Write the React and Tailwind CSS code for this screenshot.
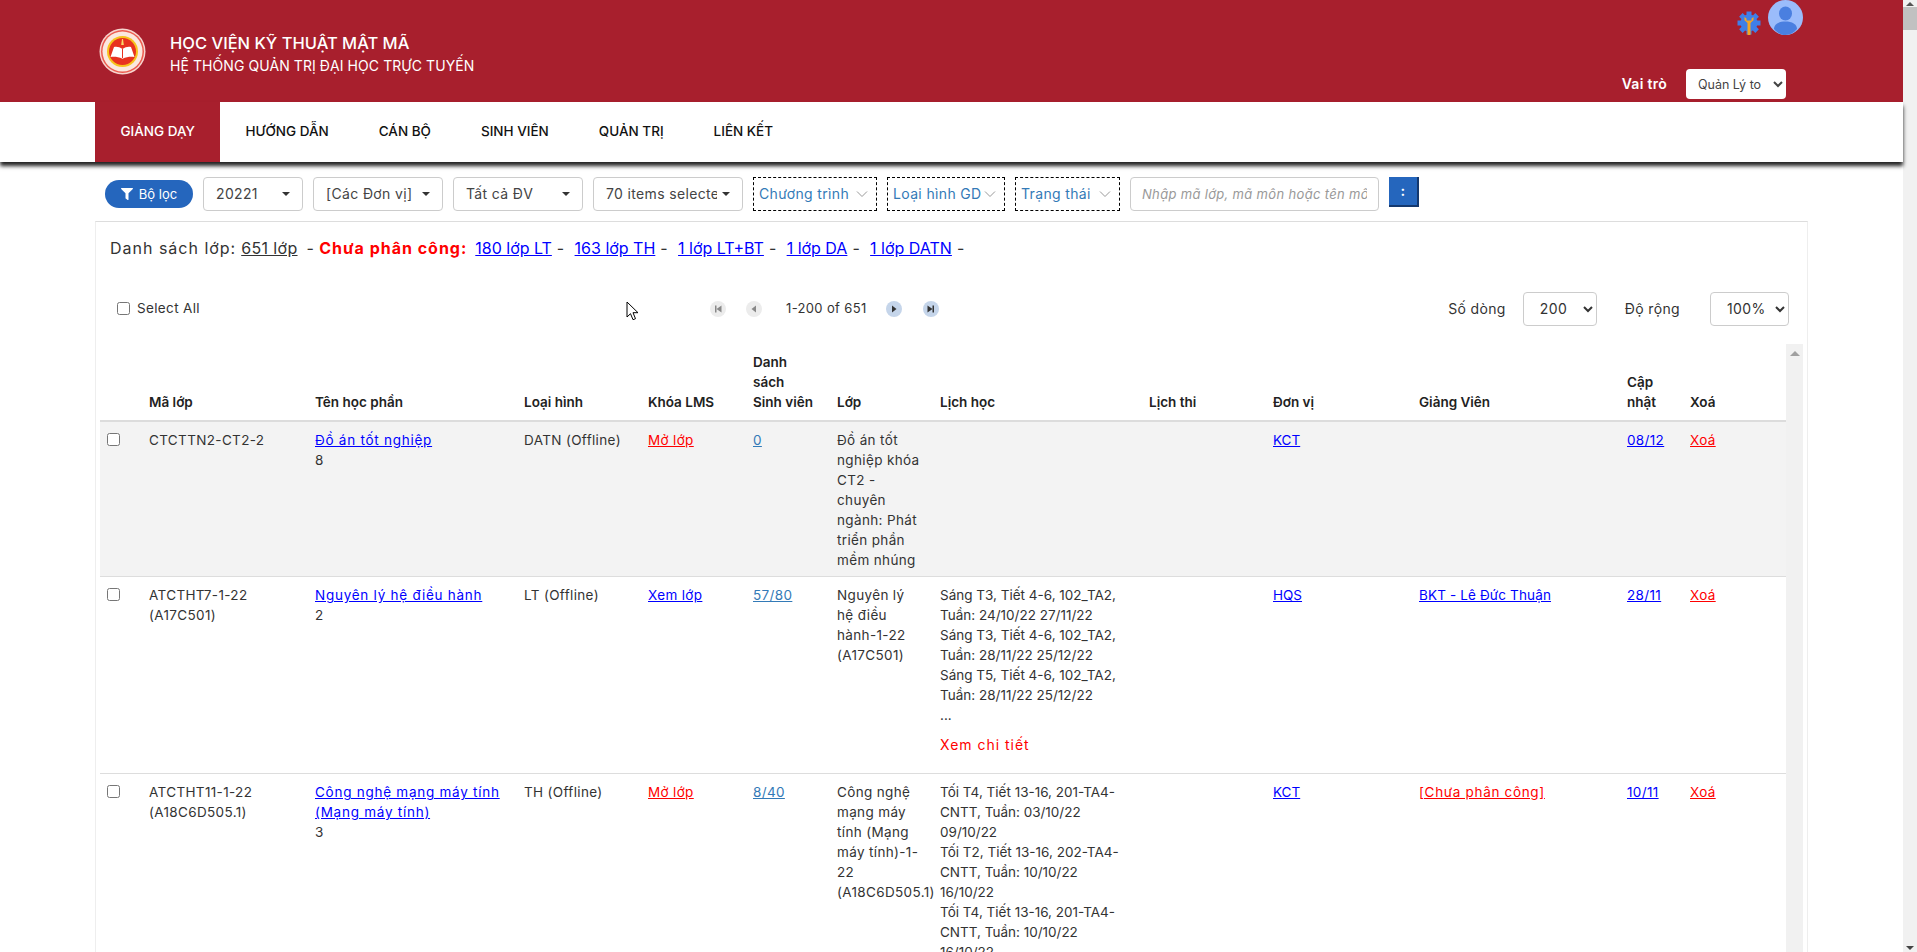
import React from "react";
import { FaFilter } from "react-icons/fa";

const navItems = ["GIẢNG DẠY", "HƯỚNG DẪN", "CÁN BỘ", "SINH VIÊN", "QUẢN TRỊ", "LIÊN KẾT"];

const rows = [
  {
    code: ["CTCTTN2-CT2-2"],
    name: ["Đồ án tốt nghiệp"],
    no: "8",
    type: "DATN (Offline)",
    lms: "Mở lớp",
    count: "0",
    cls: ["Đồ án tốt", "nghiệp khóa", "CT2 -", "chuyên", "ngành: Phát", "triển phần", "mềm nhúng"],
    schedule: [],
    unit: "KCT",
    teacher: "",
    updated: "08/12",
    shade: true,
  },
  {
    code: ["ATCTHT7-1-22", "(A17C501)"],
    name: ["Nguyên lý hệ điều hành"],
    no: "2",
    type: "LT (Offline)",
    lms: "Xem lớp",
    count: "57/80",
    cls: ["Nguyên lý", "hệ điều", "hành-1-22", "(A17C501)"],
    schedule: [
      "Sáng T3, Tiết 4-6, 102_TA2,",
      "Tuần: 24/10/22 27/11/22",
      "Sáng T3, Tiết 4-6, 102_TA2,",
      "Tuần: 28/11/22 25/12/22",
      "Sáng T5, Tiết 4-6, 102_TA2,",
      "Tuần: 28/11/22 25/12/22",
    ],
    more: true,
    unit: "HQS",
    teacher: "BKT - Lê Đức Thuận",
    updated: "28/11",
  },
  {
    code: ["ATCTHT11-1-22", "(A18C6D505.1)"],
    name: ["Công nghệ mạng máy tính", "(Mạng máy tính)"],
    no: "3",
    type: "TH (Offline)",
    lms: "Mở lớp",
    count: "8/40",
    cls: ["Công nghệ", "mạng máy", "tính (Mạng", "máy tính)-1-", "22", "(A18C6D505.1)"],
    schedule: [
      "Tối T4, Tiết 13-16, 201-TA4-",
      "CNTT, Tuần: 03/10/22",
      "09/10/22",
      "Tối T2, Tiết 13-16, 202-TA4-",
      "CNTT, Tuần: 10/10/22",
      "16/10/22",
      "Tối T4, Tiết 13-16, 201-TA4-",
      "CNTT, Tuần: 10/10/22",
      "16/10/22",
    ],
    unit: "KCT",
    teacher: "[Chưa phân công]",
    teacherRed: true,
    updated: "10/11",
  },
];

const Logo = () => (
  <svg width="47" height="47" viewBox="0 0 47 47">
    <circle cx="23.500" cy="23.500" r="23" fill="#f6d5cf" />
    <circle cx="23.500" cy="23.500" r="21.500" fill="#ec5a4e" />
    <circle cx="23.500" cy="23.500" r="20" fill="#fbe8df" />
    <circle cx="23.500" cy="23.500" r="15.500" fill="#f7c21e" />
    <circle cx="23.500" cy="23.500" r="13.500" fill="#e8321f" />
    <path d="M23 11h1l.8 6h-2.600z" fill="#f9d96b" />
    <path d="M23.500 21c-3-2.200-6-2.600-8.500-2L11.500 29c3.500-.6 7.500-.4 12 1.800 4.500-2.200 8.500-2.400 12-1.800L32 19c-2.500-.6-5.500-.2-8.500 2z" fill="#fff" />
    <path d="M23.500 21v9" stroke="#e8321f" strokeWidth="1" />
  </svg>
);

const GearIcon = () => (
  <svg width="24" height="24" viewBox="0 0 24 24">
    <g fill="#3f7fe8">
      <circle cx="12" cy="12" r="8.500" />
      <rect x="9.500" y="0.500" width="5" height="23" />
      <rect x="9.500" y="0.500" width="5" height="23" transform="rotate(45 12 12)" />
      <rect x="9.500" y="0.500" width="5" height="23" transform="rotate(90 12 12)" />
      <rect x="9.500" y="0.500" width="5" height="23" transform="rotate(135 12 12)" />
    </g>
    <path d="M7.500 6v3.200l3 2.800v12h3V12l3-2.800V6L14.500 7.500v2h-5v-2z" fill="#f5a623" />
  </svg>
);

const Avatar = () => (
  <svg width="35" height="35" viewBox="0 0 35 35">
    <circle cx="17.500" cy="17.500" r="17.500" fill="#9bbcfb" />
    <ellipse cx="17.500" cy="13.500" rx="6.500" ry="7" fill="#4a7fe0" />
    <path d="M6 29c0-5 5-7.500 11.500-7.500S29 24 29 29c-3 3.800-7 6-11.500 6S9 32.800 6 29z" fill="#4a7fe0" />
  </svg>
);

const Caret = () => (
  <span className="ml-auto h-0 w-0 shrink-0 border-x-[4px] border-t-[4px] border-x-transparent border-t-[#333]" />
);

const FakeSelect = ({ label, width }) => (
  <div className={`flex h-[34px] items-center rounded border border-[#ccc] bg-white px-[12px] text-sm text-[#444] ${width}`}>
    <span className="overflow-hidden whitespace-nowrap">{label}</span>
    <span className="w-[5px] shrink-0" />
    <Caret />
  </div>
);

const DashedSelect = ({ label, width }) => (
  <div className={`flex h-[34px] items-center border border-dashed border-black pl-[5px] pr-[8px] text-sm text-[#337ab7] ${width}`}>
    <span className="whitespace-nowrap">{label}</span>
    <svg className="ml-auto shrink-0" width="12" height="8" viewBox="0 0 12 8" fill="none" stroke="#999" strokeWidth="1">
      <path d="M1 1.500l5 5 5-5" />
    </svg>
  </div>
);

const PageBtn = ({ active, d, bar }) => (
  <span className={`flex h-[16px] w-[16px] items-center justify-center rounded-full ${active ? "bg-[#c5d5ea]" : "bg-[#ececec]"}`}>
    <svg width="10" height="10" viewBox="0 0 10 10" fill={active ? "#333" : "#888"}>
      <path d={d} />
      {bar && <rect x={bar} y="1.500" width="1.500" height="7" />}
    </svg>
  </span>
);

const Lines = ({ items }) => items.map((t) => <div key={t} className="whitespace-nowrap">{t}</div>);

const App = () => {
  return (
    <div className="flex h-[952px] w-full overflow-hidden bg-white font-[Inter,sans-serif] text-sm tracking-[0.025em] text-[#333]">
      <div className="w-[1903px] shrink-0">
        {/* header */}
        <div className="flex h-[102px] justify-between bg-[#a81f2d] pl-[99px] pr-[117px] text-white">
          <div className="flex items-center">
            <Logo />
            <div className="ml-[24px] mt-[5px]">
              <div className="text-[16.500px] font-medium leading-[24px] tracking-normal">HỌC VIỆN KỸ THUẬT MẬT MÃ</div>
              <div className="text-sm leading-[22px] tracking-[0.005em]">HỆ THỐNG QUẢN TRỊ ĐẠI HỌC TRỰC TUYẾN</div>
            </div>
          </div>
          <div className="flex flex-col justify-between pb-[3px]">
            <div className="-mr-[17px] flex items-start justify-end">
              <span className="mr-[7px] mt-[11px]"><GearIcon /></span>
              <Avatar />
            </div>
            <div className="flex items-center">
              <span className="mr-[19px] text-sm font-semibold tracking-[0.02em]">Vai trò</span>
              <select className="h-[30px] w-[100px] rounded bg-white pl-[8px] text-[12.500px] tracking-normal text-[#444]">
                <option>Quản Lý to</option>
              </select>
            </div>
          </div>
        </div>

        {/* menu */}
        <div className="relative flex h-[60px] bg-white pl-[95px] shadow-[0_4px_4px_#222]">
          {navItems.map((item, i) => (
            <div
              key={item}
              className={`flex items-center text-[13.500px] font-medium tracking-normal ${i === 0 ? "bg-[#a81f2d] px-[25.500px] text-white" : "px-[25px] text-[#111]"}`}
            >
              {item}
            </div>
          ))}
        </div>

        {/* filter bar */}
        <div className="flex h-[59px] items-start gap-[10px] pl-[105px] pt-[15px]">
          <div className="mt-[3px] flex h-[28px] w-[88px] items-center justify-center rounded-full bg-[#2566bd] text-[13px] tracking-normal text-white">
            <FaFilter className="mr-[6px] text-[12px]" />
            Bộ lọc
          </div>
          <FakeSelect label="20221" width="w-[100px]" />
          <FakeSelect label="[Các Đơn vị]" width="w-[130px]" />
          <FakeSelect label="Tất cả ĐV" width="w-[130px]" />
          <FakeSelect label="70 items selected" width="w-[150px]" />
          <DashedSelect label="Chương trình" width="w-[124px]" />
          <DashedSelect label="Loại hình GD" width="w-[118px]" />
          <DashedSelect label="Trạng thái" width="w-[105px]" />
          <input
            className="h-[34px] w-[249px] rounded border border-[#ccc] px-[11px] text-[13px] tracking-[0.025em] placeholder:italic placeholder:text-[#999]"
            placeholder="Nhập mã lớp, mã môn hoặc tên môn"
          />
          <div className="flex h-[30px] w-[30px] items-center justify-center border-b-2 border-r-2 border-[#14386e] bg-[#2566bd] text-sm font-bold text-white">
            :
          </div>
        </div>

        {/* card */}
        <div className="relative ml-[95px] w-[1713px] border-l border-r border-t border-l-[#eee] border-r-[#eee] border-t-[#ddd]">
          <div className="flex h-[51px] items-center pl-[14px] pt-[1px] text-base">
            <span className="tracking-[0.062em]">Danh sách lớp:</span>
            <a className="ml-[5px] underline">651 lớp</a>
            <span className="ml-[9px]">-</span>
            <b className="ml-[5px] font-bold tracking-[0.062em] text-[#ff0000]">Chưa phân công:</b>
            <a className="ml-[8px] tracking-normal text-[#0000ff] underline">180 lớp LT</a>
            <span className="ml-[5px]">-</span>
            <a className="ml-[10px] tracking-normal text-[#0000ff] underline">163 lớp TH</a>
            <span className="ml-[5px]">-</span>
            <a className="ml-[10px] tracking-normal text-[#0000ff] underline">1 lớp LT+BT</a>
            <span className="ml-[5px]">-</span>
            <a className="ml-[10px] tracking-normal text-[#0000ff] underline">1 lớp DA</a>
            <span className="ml-[5px]">-</span>
            <a className="ml-[10px] tracking-normal text-[#0000ff] underline">1 lớp DATN</a>
            <span className="ml-[5px]">-</span>
          </div>

          <div className="flex h-[71px] items-center pr-[18px]">
            <label className="ml-[21px] flex w-[593px] items-center text-[13.500px]">
              <input type="checkbox" className="mr-[7px] h-[13px] w-[13px]" />
              Select All
            </label>
            <div className="flex items-center">
              <PageBtn d="M8.500 1.500v7L3.500 5z" bar="2" />
              <span className="w-[20px]" />
              <PageBtn d="M7 1.500v7L2.500 5z" />
              <span className="ml-[24px] w-[84px] whitespace-nowrap text-[13px]">1-200 of 651</span>
              <span className="w-[16px]" />
              <PageBtn active d="M3 1.500v7L7.500 5z" />
              <span className="w-[21px]" />
              <PageBtn active d="M1.500 1.500v7L6.500 5z" bar="6.500" />
            </div>
            <div className="ml-auto flex items-center">
              <span className="mr-[17px] text-sm">Số dòng</span>
              <select className="h-[34px] w-[74px] rounded border border-[#ccc] pl-[12px] text-sm">
                <option>200</option>
              </select>
              <span className="ml-[28px] mr-[30px] text-sm">Độ rộng</span>
              <select className="h-[34px] w-[79px] rounded border border-[#ccc] pl-[12px] text-sm">
                <option>100%</option>
              </select>
            </div>
          </div>

          <div className="flex pl-[4px]">
            <table className="w-[1686px] table-fixed border-collapse text-[13.500px] leading-[20px]">
              <colgroup>
                <col className="w-[41px]" />
                <col className="w-[166px]" />
                <col className="w-[209px]" />
                <col className="w-[124px]" />
                <col className="w-[105px]" />
                <col className="w-[84px]" />
                <col className="w-[103px]" />
                <col className="w-[209px]" />
                <col className="w-[124px]" />
                <col className="w-[146px]" />
                <col className="w-[208px]" />
                <col className="w-[63px]" />
                <col className="w-[104px]" />
              </colgroup>
              <thead>
                <tr className="h-[77px] border-b-[2px] border-[#dcdcdc] text-left align-bottom text-[13.500px] font-semibold tracking-normal text-[#222]">
                  <th />
                  <th className="px-2 pb-[8px] font-semibold">Mã lớp</th>
                  <th className="px-2 pb-[8px] font-semibold">Tên học phần</th>
                  <th className="px-2 pb-[8px] font-semibold">Loại hình</th>
                  <th className="px-2 pb-[8px] font-semibold">Khóa LMS</th>
                  <th className="whitespace-nowrap px-2 pb-[8px] font-semibold">Danh<br />sách<br />Sinh viên</th>
                  <th className="px-2 pb-[8px] font-semibold">Lớp</th>
                  <th className="px-2 pb-[8px] font-semibold">Lịch học</th>
                  <th className="px-2 pb-[8px] font-semibold">Lịch thi</th>
                  <th className="px-2 pb-[8px] font-semibold">Đơn vị</th>
                  <th className="px-2 pb-[8px] font-semibold">Giảng Viên</th>
                  <th className="px-2 pb-[8px] font-semibold">Cập<br />nhật</th>
                  <th className="px-2 pb-[8px] font-semibold">Xoá</th>
                </tr>
              </thead>
              <tbody>
                {rows.map((r) => (
                  <tr key={r.code[0]} className={`border-b border-[#ddd] align-top ${r.shade ? "bg-[#f3f3f3]" : ""}`}>
                    <td className="py-[11px] pl-[7px]">
                      <input type="checkbox" className="block h-[13px] w-[13px]" />
                    </td>
                    <td className="p-2"><Lines items={r.code} /></td>
                    <td className="p-2">
                      {r.name.map((n) => (
                        <a key={n} className="block whitespace-nowrap tracking-[0.055em] text-[#0000ff] underline">{n}</a>
                      ))}
                      {r.no}
                    </td>
                    <td className="whitespace-nowrap p-2">{r.type}</td>
                    <td className="p-2">
                      <a className={`underline ${r.lms === "Mở lớp" ? "text-[#ff0000]" : "text-[#0000ff]"}`}>{r.lms}</a>
                    </td>
                    <td className="p-2"><a className="text-[#337ab7] underline">{r.count}</a></td>
                    <td className="pb-[6px] pl-2 pr-2 pt-2"><Lines items={r.cls} /></td>
                    <td className="p-2 tracking-normal">
                      <Lines items={r.schedule} />
                      {r.more && (
                        <div className="pb-[10px]">
                          <div>...</div>
                          <div className="mt-[10px] text-sm tracking-[0.07em] text-[#ff0000]">Xem chi tiết</div>
                        </div>
                      )}
                    </td>
                    <td className="p-2" />
                    <td className="p-2"><a className="tracking-normal text-[#0000ff] underline">{r.unit}</a></td>
                    <td className="p-2">
                      <a className={`whitespace-nowrap underline ${r.teacherRed ? "tracking-[0.05em] text-[#ff0000]" : "tracking-[0.01em] text-[#0000ff]"}`}>{r.teacher}</a>
                    </td>
                    <td className="p-2"><a className="text-[#0000ff] underline">{r.updated}</a></td>
                    <td className="p-2"><a className="text-[#ff0000] underline">Xoá</a></td>
                  </tr>
                ))}
              </tbody>
            </table>
            <div className="flex h-[620px] w-[17px] shrink-0 justify-center bg-[#f1f1f1] pt-[7px]">
              <span className="h-0 w-0 border-x-[5px] border-b-[5px] border-x-transparent border-b-[#a0a0a0]" />
            </div>
          </div>

          {/* mouse pointer */}
          <svg className="absolute left-[530px] top-[79px]" width="13" height="20" viewBox="0 0 13 20">
            <path d="M1 1v15l3.500-3.300 2.500 6 2.500-1-2.500-6H12z" fill="#fff" stroke="#000" strokeWidth="1" />
          </svg>
        </div>
      </div>

      {/* page scrollbar */}
      <div className="flex h-full w-[14px] shrink-0 flex-col items-center bg-[#f1f1f1]">
        <span className="mt-[2px] h-0 w-0 border-x-[4px] border-b-[4px] border-x-transparent border-b-[#555]" />
        <div className="mt-px h-[23px] w-full bg-[#c1c1c1]" />
        <span className="mb-[2px] mt-auto h-0 w-0 border-x-[4px] border-t-[4px] border-x-transparent border-t-[#444]" />
      </div>
    </div>
  );
};

export default App;
